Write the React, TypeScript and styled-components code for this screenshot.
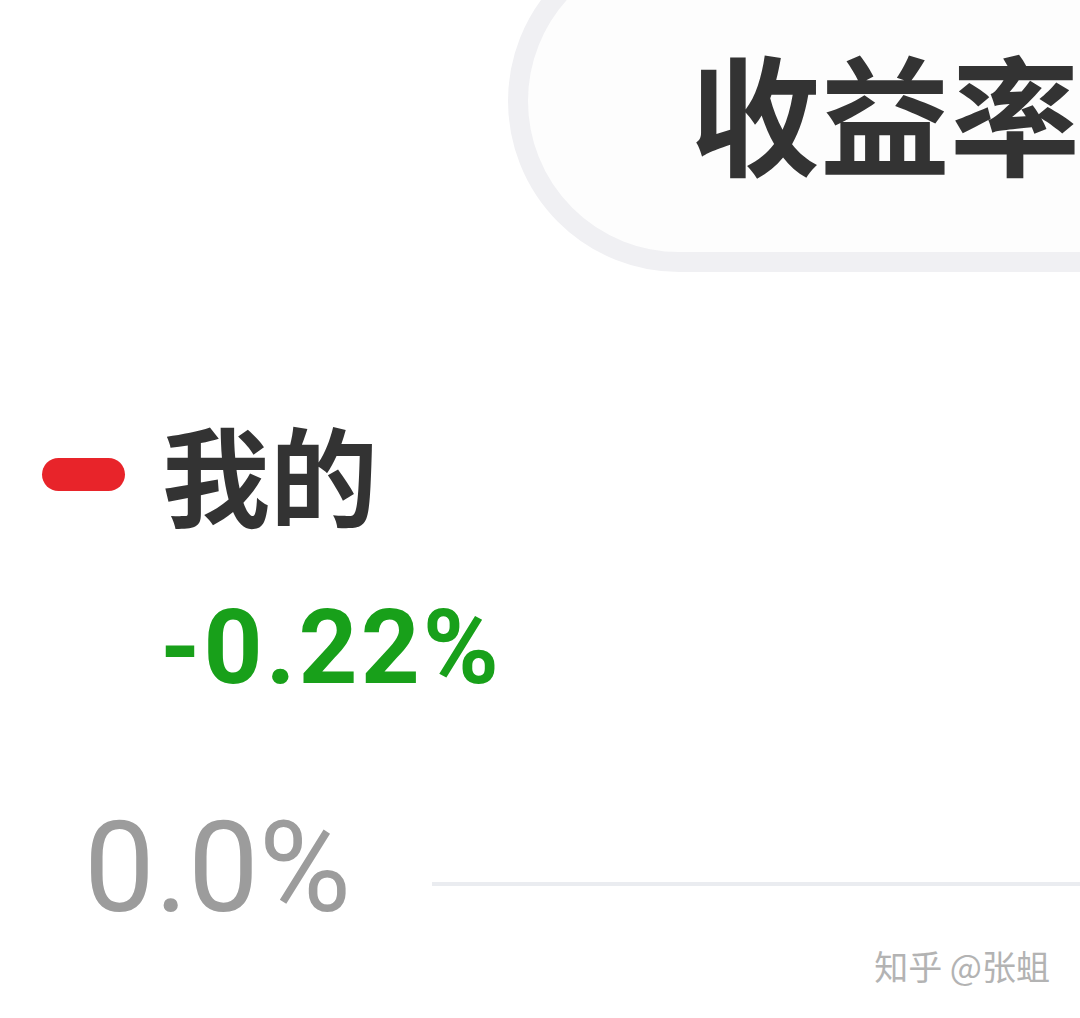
import React from 'react';
import styled, { createGlobalStyle } from 'styled-components';

const GlobalStyle = createGlobalStyle`
  html, body {
    margin: 0;
    padding: 0;
    background: #fff;
  }
  body {
    font-family: Roboto, "Noto Sans CJK SC", "Noto Sans", sans-serif;
  }
`;

const Page = styled.div`
  width: 1080px;
  height: 1018px;
  overflow: hidden;
  background: #fff;
`;

const Header = styled.div`
  display: flex;
  margin-top: -70px;
  padding-left: 508px;
`;

const TabPill = styled.div`
  flex: 1;
  height: 286px;
  margin-right: -260px;
  border: 20px solid #f0f0f3;
  border-radius: 171px;
  background: #fdfdfd;
  display: flex;
  align-items: center;
  padding: 16px 0 0 162px;
  box-sizing: content-box;
`;

const TabTitle = styled.span`
  font-family: "Noto Sans CJK SC", sans-serif;
  font-weight: 700;
  font-size: 130px;
  line-height: 1;
  color: #333;
  white-space: nowrap;
`;

const Legend = styled.div`
  margin: 146px 0 0 42px;
`;

const LegendRow = styled.div`
  display: flex;
  align-items: center;
  gap: 37px;
`;

const Swatch = styled.span<{ $color: string }>`
  width: 83px;
  height: 33px;
  margin-top: 4px;
  border-radius: 17px;
  background: ${(p) => p.$color};
`;

const LegendName = styled.span`
  font-family: "Noto Sans CJK SC", sans-serif;
  font-weight: 700;
  font-size: 108px;
  line-height: 1;
  color: #333;
`;

const LegendValue = styled.div<{ $up: boolean }>`
  margin: 70px 0 0 118px;
  font-family: Roboto, sans-serif;
  font-weight: 700;
  font-size: 103px;
  letter-spacing: 3px;
  line-height: 1;
  color: ${(p) => (p.$up ? '#e8242a' : '#18a01a')};
`;

const AxisRow = styled.div`
  display: flex;
  align-items: flex-start;
  margin-top: 106px;
  padding-left: 84px;
`;

const AxisLabel = styled.span`
  width: 348px;
  font-family: Roboto, sans-serif;
  font-weight: 400;
  font-size: 126px;
  line-height: 1;
  color: #9c9c9c;
`;

const GridLine = styled.div`
  flex: 1;
  height: 4px;
  margin-top: 77px;
  background: #eaecf0;
`;

const Watermark = styled.div`
  margin-top: 18px;
  padding-right: 30px;
  text-align: right;
  font-family: "Noto Sans CJK SC", sans-serif;
  font-size: 34px;
  line-height: 1;
  color: #b3b3b3;
  text-shadow: 1px 1px 0 #fff, -1px -1px 0 #fff;
`;

const series = [{ name: '我的', color: '#e8242a', value: -0.22 }];

const App: React.FC = () => {
  return (
    <Page>
      <GlobalStyle />
      <Header>
        <TabPill>
          <TabTitle>收益率</TabTitle>
        </TabPill>
      </Header>
      {series.map((s) => (
        <Legend key={s.name}>
          <LegendRow>
            <Swatch $color={s.color} />
            <LegendName>{s.name}</LegendName>
          </LegendRow>
          <LegendValue $up={s.value > 0}>{s.value.toFixed(2)}%</LegendValue>
        </Legend>
      ))}
      <AxisRow>
        <AxisLabel>0.0%</AxisLabel>
        <GridLine />
      </AxisRow>
      <Watermark>知乎 @张蛆</Watermark>
    </Page>
  );
};

export default App;
